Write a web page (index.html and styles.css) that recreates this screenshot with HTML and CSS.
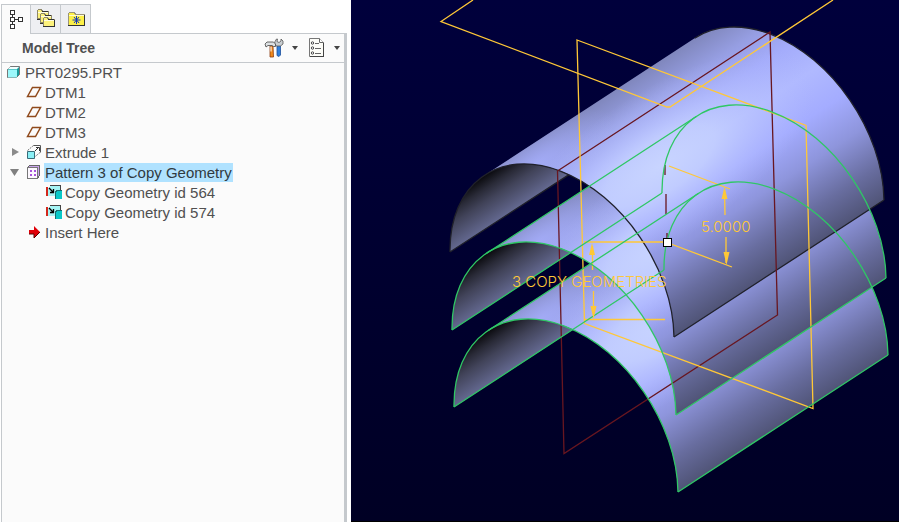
FILE: index.html
```html
<!DOCTYPE html>
<html lang="en">
<head>
<meta charset="utf-8">
<title>PRT0295.PRT</title>
<link rel="stylesheet" href="styles.css">
</head>
<body>
<aside class="navigator">
  <div class="tabs" role="tablist">
    <button class="tab tab-active" role="tab" aria-selected="true" aria-label="Model Tree">
      <svg width="18" height="20" viewBox="0 0 18 20" shape-rendering="crispEdges"><path d="M5.500 4v11M6 9.500h6" stroke="#333" fill="none"/><path d="M3.500 .5h4v4h-4zM3.500 7.500h4v4h-4zM3.500 14.500h4v4h-4zM11.500 7.500h4v4h-4z" fill="#fff" stroke="#333"/></svg>
    </button>
    <button class="tab" role="tab" aria-selected="false" aria-label="Folder Browser">
      <svg width="20" height="20" viewBox="0 0 20 20" shape-rendering="crispEdges"><g fill="#fdf27c" stroke="#8d8768"><path d="M1.500 9.500v-8l1-1h3l1 2h6v7z"/><path d="M4.500 13.500v-8l1-1h3l1 2h6v7z"/><path d="M7.500 17.500v-8l1-1h3l1 2h6v7z"/></g><path d="M2 3.500h10M5 7.500h10M8 11.500h10" stroke="#fffde0"/><path d="M1 10.500h3M4 14.500h3M7 17.500h12M18.500 11v7M6 2.500h6M9 6.500h6M12 10.500h6" stroke="#333" fill="none"/></svg>
    </button>
    <button class="tab" role="tab" aria-selected="false" aria-label="Favorites">
      <svg width="20" height="18" viewBox="0 0 20 18" shape-rendering="crispEdges"><path d="M2.500 15.500v-12l1-1h5l1 2h9v11z" fill="#fdf047" stroke="#9a9478"/><path d="M3 5.500h15" stroke="#fffbd0"/><path d="M2 15.500h16.500V5" stroke="#333" fill="none"/><path d="M10.500 6v8M6.500 10h8M8 7l5 6M13 7l-5 6" stroke="#1238b8" shape-rendering="auto"/></svg>
    </button>
  </div>
  <section class="panel">
    <header class="panel-head">
      <h1 class="panel-title">Model Tree</h1>
      <button class="tool" aria-label="Settings">
        <svg width="20" height="20" viewBox="0 0 20 20"><path d="M13 7h3.500v10l-1.500 1.500-2-1z" fill="#2e7fdd" stroke="#1c4f9c" stroke-width=".8"/><path d="M11 3.500l1.500-2.500 1 0-.5 2.500 2 1L17 3l0-2 2 2 0 3-2.500 2h-4l-2-2z" fill="#c9ced1" stroke="#555" stroke-width=".8"/><path d="M6 8h3l.5 11H6z" fill="#f08a1c" stroke="#8a3b10" stroke-width=".8"/><path d="M1 6l2-2h6.500l2 2v2.500H9.500L8 7.500H4L2 9z" fill="#dde1e3" stroke="#444" stroke-width=".8"/><path d="M7 8.500v5" stroke="#fff"/></svg>
        <span class="caret"></span>
      </button>
      <button class="tool" aria-label="Show">
        <svg width="18" height="20" viewBox="0 0 18 20"><path d="M1.500.5h10l4 4v14h-14z" fill="#fdfdf8" stroke="#777"/><path d="M11.500.5v4h4" fill="#fff" stroke="#666"/><path d="M2 18.500h14M15.500 5v14" stroke="#444" fill="none"/><g fill="#fff" stroke="#444"><circle cx="4.500" cy="5" r="1.200"/><circle cx="4.500" cy="10" r="1.200"/><circle cx="4.500" cy="15" r="1.200"/></g><path d="M7 5.500h4M7 10.500h6M7 15.500h6" stroke="#666"/></svg>
        <span class="caret"></span>
      </button>
    </header>

    <svg width="0" height="0" class="sprites">
      <symbol id="i-datum" viewBox="0 0 16 16"><path d="M1.500 12.500l5-9h8l-5 9z" fill="none" stroke="#8f4a1c" stroke-width="1.500"/></symbol>
      <symbol id="i-copy" viewBox="0 0 16 16" shape-rendering="crispEdges"><path d="M2 4l3-3h10v7h-5v4H2z" fill="#a6f5f5"/><path d="M4 1.500h11M14.500 2v5" stroke="#444" fill="none"/><path d="M0 3h2v9H0z" fill="#d3261b"/><path d="M3 4l4 4M7.500 5v4M4 8.500h4" stroke="#000" stroke-width="1.300" fill="none" shape-rendering="auto"/><path d="M10 7h6v8h-6z" fill="#08c8c8"/><path d="M9.500 15V7.500H11M10 6.500h6" stroke="#186d70" fill="none"/></symbol>
    </svg>

    <ul class="tree" role="tree">
      <li class="row root" role="treeitem"><svg class="icon" viewBox="0 0 16 16"><path d="M1.500 5.500l3-3h9v8l-3 3h-9z" fill="#169b9b" stroke="#777"/><path d="M2 5.500h9v8H2z" fill="#9cf8fb"/><path d="M2 5l2-2h9l-2 2z" fill="#f2ffff"/></svg><span class="label">PRT0295.PRT</span></li>
      <li class="row" role="treeitem"><span class="twist"></span><svg class="icon"><use href="#i-datum"/></svg><span class="label">DTM1</span></li>
      <li class="row" role="treeitem"><span class="twist"></span><svg class="icon"><use href="#i-datum"/></svg><span class="label">DTM2</span></li>
      <li class="row" role="treeitem"><span class="twist"></span><svg class="icon"><use href="#i-datum"/></svg><span class="label">DTM3</span></li>
      <li class="row" role="treeitem" aria-expanded="false"><button class="twist" aria-label="Expand Extrude 1"><svg width="10" height="10" viewBox="0 0 10 10"><path d="M2 1l7 4-7 4z" fill="#8b8b8b"/></svg></button><svg class="icon" viewBox="0 0 16 16"><path d="M1.500 6.500l6-5M8 13.500l6-5" stroke="#777" stroke-dasharray="2 1" fill="none"/><path d="M7.500 1.500h7v7" fill="none" stroke="#555"/><path d="M1.500 7.500h7v7h-7z" fill="#8aeff5" stroke="#376b78"/><path d="M9 7l4-4M10 3.500h3.500V7" stroke="#333" fill="none"/></svg><span class="label">Extrude 1</span></li>
      <li class="row" role="treeitem" aria-expanded="true" aria-selected="true"><button class="twist" aria-label="Collapse Pattern 3 of Copy Geometry"><svg width="10" height="10" viewBox="0 0 10 10"><path d="M0 2h9l-4.500 7z" fill="#808080"/></svg></button><svg class="icon" viewBox="0 0 16 16" shape-rendering="crispEdges"><path d="M1.500 3.500l2-2h10v10l-2 3h-10z" fill="#c9a4ec" stroke="#666"/><path d="M1.500 3.500h10v11h-10z" fill="#fdf8ff" stroke="#777"/><path d="M4 6h2v2H4zM8 6h2v2H8zM4 10h2v2H4zM8 10h2v2H8z" fill="#a855dc"/></svg><span class="label label-selected">Pattern 3 of Copy Geometry</span></li>
      <li class="row nested" role="treeitem"><svg class="icon"><use href="#i-copy"/></svg><span class="label">Copy Geometry id 564</span></li>
      <li class="row nested" role="treeitem"><svg class="icon"><use href="#i-copy"/></svg><span class="label">Copy Geometry id 574</span></li>
      <li class="row" role="treeitem"><span class="twist"></span><svg class="icon" viewBox="0 0 16 16"><path d="M3 6h5V2l6 6-6 6v-4H3z" fill="#e00008"/><path d="M3 10h5v4l6-6" stroke="#5a0000" fill="none"/></svg><span class="label">Insert Here</span></li>
    </ul>
  </section>
</aside>

<main class="viewport">
  <svg class="scene" viewBox="351 0 548 522" preserveAspectRatio="xMinYMin slice" role="img" aria-label="Model view">
    <defs>
      <!-- Shading runs across the sweep direction of the cylinder -->
      <linearGradient id="outer-shade" gradientUnits="userSpaceOnUse" x1="485" y1="175" x2="615" y2="375">
        <stop offset="0" stop-color="#8087bd"/>
        <stop offset=".12" stop-color="#969ee2"/>
        <stop offset=".24" stop-color="#a4acfb"/>
        <stop offset=".38" stop-color="#b0b9ff"/>
        <stop offset=".54" stop-color="#a4acff"/>
        <stop offset=".7" stop-color="#8e95dc"/>
        <stop offset=".87" stop-color="#686d9f"/>
        <stop offset="1" stop-color="#505477"/>
      </linearGradient>
      <!-- Specular light, strongest towards the front of the sweep -->
      <radialGradient id="specular" gradientUnits="userSpaceOnUse" cx="0" cy="0" r="1" gradientTransform="translate(660 166) rotate(-33) scale(180 74)">
        <stop offset="0" stop-color="#c8d4ff"/>
        <stop offset=".35" stop-color="#c6d2ff" stop-opacity=".8"/>
        <stop offset="1" stop-color="#b0b8ff" stop-opacity="0"/>
      </radialGradient>
      <radialGradient id="front-glow" gradientUnits="userSpaceOnUse" cx="0" cy="0" r="1" gradientTransform="translate(535 165) rotate(-33) scale(90 34)">
        <stop offset="0" stop-color="#a8b0ff" stop-opacity=".8"/>
        <stop offset="1" stop-color="#a8b0ff" stop-opacity="0"/>
      </radialGradient>
      <linearGradient id="inner-shade" gradientUnits="userSpaceOnUse" x1="485" y1="175" x2="510" y2="213">
        <stop offset="0" stop-color="#0a0a0e"/>
        <stop offset=".25" stop-color="#292a37"/>
        <stop offset=".5" stop-color="#414359"/>
        <stop offset="1" stop-color="#646991"/>
      </linearGradient>
      <path id="outer" d="M484.600 175.200L694.600 38.200C715.100 24.900 742.100 23.400 770.400 34.100C832.300 57.600 883.100 131.800 884 200L674 337C673.100 268.800 622.300 194.600 560.400 171.100C532.100 160.400 505.100 161.900 484.600 175.200Z"/>
      <g id="sheet">
        <use href="#outer" fill="url(#outer-shade)"/>
        <use href="#outer" fill="url(#front-glow)"/>
        <use href="#outer" fill="url(#specular)"/>
        <path fill="url(#inner-shade)" d="M450 252C449.100 183.800 498.500 147.600 560.400 171.100L569 174.600Z"/>
      </g>
      <path id="front-arc" d="M450 252C449.100 183.800 498.500 147.600 560.400 171.100C622.300 194.600 673.100 268.800 674 337"/>
      <g id="copy-edges">
        <use href="#front-arc"/>
        <use href="#front-arc" transform="translate(210 -137)"/>
        <path d="M450 252L660 115M484.600 175.200L694.600 38.200M674 337L884 200"/>
      </g>
    </defs>

    <use href="#sheet" transform="translate(4 155)"/>
    <use href="#sheet" transform="translate(2 78)"/>
    <use href="#sheet"/>

    <g class="edge edge-dark">
      <use href="#front-arc"/>
      <path d="M450 252L569 174.600M674 337L884 200M694.600 38.200C715.100 24.900 742.100 23.400 770.400 34.100C832.300 57.600 883.100 131.800 884 200"/>
    </g>
    <path class="edge edge-plane" d="M557.500 171L770 32L777.500 315L564 453.500Z"/>
    <path class="edge edge-plane" d="M665 165v10M666 194v20M667 233v6"/>
    <g class="edge edge-datum">
      <path d="M473 0L441 21.500L667 107H670L833 0"/>
      <path d="M577 40L806 125.500L813 408.500L584.500 323.500Z"/>
      <path d="M584 242h80M592.500 246v24M593.500 291v24M584 319.500h81"/>
      <path d="M669 166l61 23M724.500 190l.5 25M726 237v26M671 244l61 23"/>
    </g>
    <g class="edge edge-copy">
      <use href="#copy-edges" transform="translate(2 78)"/>
      <use href="#copy-edges" transform="translate(4 155)"/>
    </g>
    <g class="arrowhead">
      <path d="M592 243l3 12h-6zM593.500 319l-3-13h6zM724.500 187l3 12h-6zM726.500 265l-3-13h6z"/>
    </g>
    <text class="note" x="512" y="287">3 COPY GEOMETRIES</text>
    <text class="note" x="701" y="232">5.0000</text>
    <rect class="handle" x="663.500" y="238.500" width="8" height="8"/>
  </svg>
</main>
</body>
</html>
```

FILE: styles.css
```css
* {
  box-sizing: border-box;
}

body {
  margin: 0;
  min-height: 100vh;
  display: flex;
  background: #fff;
  color: #505050;
  font: 15px/20px "Liberation Sans", sans-serif;
}

button {
  margin: 0;
  padding: 0;
  border: 0;
  background: none;
  color: inherit;
  font: inherit;
}

.navigator {
  flex: 0 0 351px;
  display: flex;
  flex-direction: column;
  padding: 4px 4px 0 1px;
}

.tabs {
  display: flex;
}

.tab {
  display: flex;
  align-items: center;
  justify-content: center;
  width: 30px;
  height: 29px;
  border: 1px solid #c5c9cd;
  border-left-width: 0;
  border-bottom: 0;
  background: #eeeff2;
}

.tab-active {
  border-left-width: 1px;
  height: 30px;
  margin-bottom: -1px;
  background: #fbfbfb;
  position: relative;
}

.panel {
  flex: 1;
  border: solid #c5c9cd;
  border-width: 1px 3px 0 1px;
  background: #fbfbfb;
}

.panel-head {
  display: flex;
  align-items: center;
  gap: 10px;
  height: 29px;
  padding: 0 4px 0 20px;
  border-bottom: 1px solid #c5c9cd;
}

.panel-title {
  flex: 1;
  margin: 0;
  font-size: 14px;
  line-height: 20px;
}

.tool {
  display: flex;
  align-items: center;
  gap: 8px;
}

.caret {
  border: solid transparent;
  border-width: 4px 3px 0;
  border-top-color: #444;
}

.sprites {
  position: absolute;
}

.tree {
  margin: -1px 0 0;
  padding: 0;
  list-style: none;
}

.row {
  display: flex;
  align-items: center;
  height: 20px;
  padding-left: 4px;
}

.nested {
  padding-left: 44px;
}

.twist {
  display: flex;
  flex: 0 0 20px;
  padding-left: 4px;
}

.icon {
  flex: none;
  width: 16px;
  height: 16px;
}

.label {
  margin-left: 2px;
  padding: 0 1px;
  line-height: 19px;
  white-space: nowrap;
}

.label-selected {
  background: #b0e2ff;
  color: #303a40;
}

.viewport {
  flex: 1;
  min-width: 0;
  height: 100vh;
  border-bottom: 1px solid #000;
  background: linear-gradient(#00003c, #000024);
}

.scene {
  display: block;
  width: 100%;
  height: 100%;
}

.edge {
  fill: none;
  stroke-width: 1.3px;
}

.edge-dark {
  stroke: #20212b;
}

.edge-plane {
  stroke: #681620;
}

.edge-datum {
  stroke: #ffc837;
}

.edge-copy {
  stroke: #2fc765;
}

.arrowhead {
  fill: #ffc837;
}

.note {
  fill: #ffc837;
  font: 300 15px Inter, "Liberation Sans", sans-serif;
}

.handle {
  fill: #fff;
  stroke: #000;
}
```
